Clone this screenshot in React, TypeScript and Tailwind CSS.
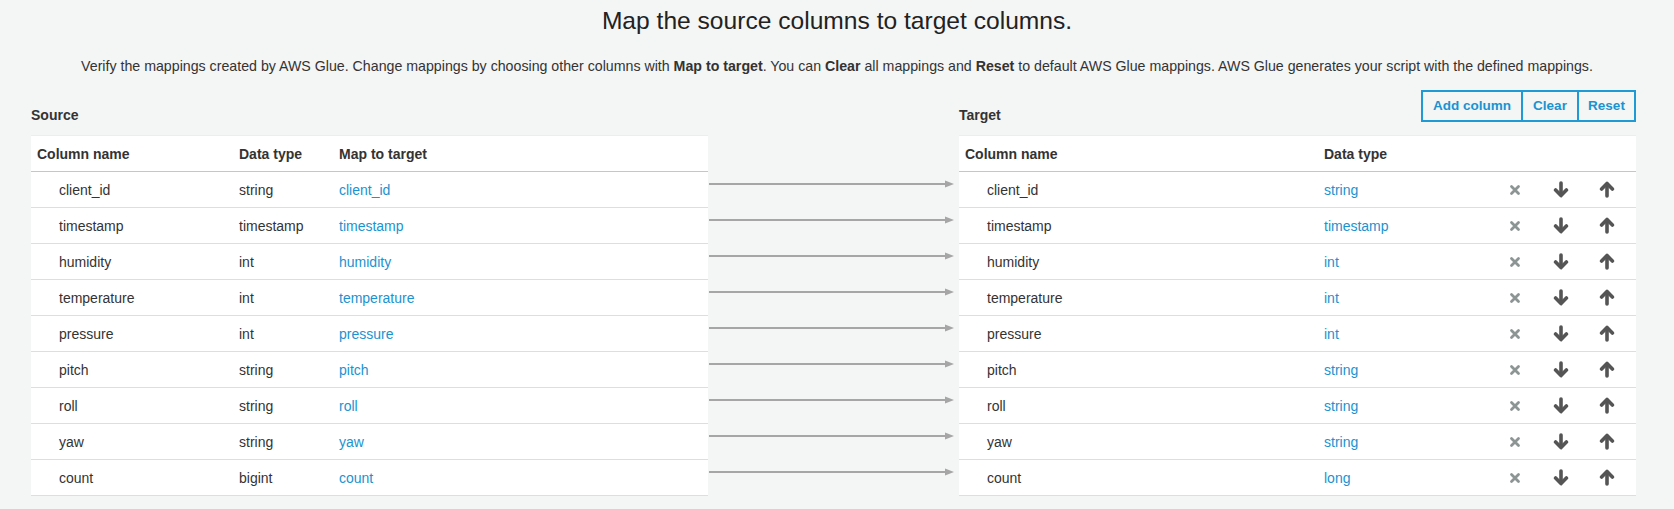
import React from "react";

const rows: [string, string, string, string][] = [
  ["client_id", "string", "client_id", "string"],
  ["timestamp", "timestamp", "timestamp", "timestamp"],
  ["humidity", "int", "humidity", "int"],
  ["temperature", "int", "temperature", "int"],
  ["pressure", "int", "pressure", "int"],
  ["pitch", "string", "pitch", "string"],
  ["roll", "string", "roll", "string"],
  ["yaw", "string", "yaw", "string"],
  ["count", "bigint", "count", "long"],
];

function Arrow() {
  return (
    <svg width="251" height="36" className="block">
      <rect x="1" y="11" width="237" height="2" fill="#a6a6a6" />
      <polygon points="237,8.5 246,12 237,15.5" fill="#a6a6a6" />
    </svg>
  );
}

function XIcon() {
  return (
    <svg width="12" height="12" viewBox="0 0 12 12" className="block">
      <path
        d="M2.5 2.5 L9.5 9.5 M9.5 2.5 L2.5 9.5"
        stroke="#8c9494"
        strokeWidth="2.8"
        strokeLinecap="round"
        fill="none"
      />
    </svg>
  );
}

function DownIcon() {
  return (
    <svg width="16" height="17" viewBox="0 0 16 17" className="block">
      <g stroke="#555555" strokeWidth="3.6" strokeLinecap="round" strokeLinejoin="round" fill="none">
        <path d="M8 2 V13" />
        <path d="M2.6 9 L8 14.6 L13.4 9" />
      </g>
    </svg>
  );
}

function UpIcon() {
  return (
    <svg width="16" height="17" viewBox="0 0 16 17" className="block">
      <g stroke="#555555" strokeWidth="3.6" strokeLinecap="round" strokeLinejoin="round" fill="none">
        <path d="M8 15 V4" />
        <path d="M2.6 8 L8 2.4 L13.4 8" />
      </g>
    </svg>
  );
}

export default function App() {
  return (
    <div
      className="w-full min-h-[509px] bg-[#f4f5f5] text-[#333333] text-[14px] leading-[20px]"
      style={{ fontFamily: '"Liberation Sans", Arial, sans-serif' }}
    >
      <h1 className="pt-[7px] text-center text-[24.6px] leading-[28px] font-normal text-[#222222]">
        Map the source columns to target columns.
      </h1>
      <p className="mt-[21px] text-center text-[14.2px]">
        Verify the mappings created by AWS Glue. Change mappings by choosing other columns with{" "}
        <b>Map to target</b>. You can <b>Clear</b> all mappings and <b>Reset</b> to default AWS Glue
        mappings. AWS Glue generates your script with the defined mappings.
      </p>

      <div className="mt-[14px] flex pl-[31px] pr-[38px] pb-[14px]">
        {/* Source */}
        <div className="w-[677px] shrink-0">
          <div className="h-[45px]">
            <div className="pt-[15px] font-bold">Source</div>
          </div>
          <div className="bg-white">
            <div className="grid h-[37px] grid-cols-[208px_100px_1fr] items-center border-t border-b border-t-[#eceeee] border-b-[#c6c6c6] font-bold">
              <div className="pl-[6px]">Column name</div>
              <div>Data type</div>
              <div>Map to target</div>
            </div>
            {rows.map((r) => (
              <div
                key={r[0]}
                className="grid h-[36px] grid-cols-[208px_100px_1fr] items-center border-b border-[#dedede]"
              >
                <div className="pl-[28px]">{r[0]}</div>
                <div>{r[1]}</div>
                <div className="text-[#1a93d0]">{r[2]}</div>
              </div>
            ))}
          </div>
        </div>

        {/* Arrows */}
        <div className="w-[251px] shrink-0 pt-[82px]">
          {rows.map((r) => (
            <Arrow key={r[0]} />
          ))}
        </div>

        {/* Target */}
        <div className="w-[677px] shrink-0">
          <div className="flex h-[45px] items-start justify-between">
            <div className="pt-[15px] font-bold">Target</div>
            <div className="flex h-[32px] text-[13.5px] font-bold text-[#1a93d0]">
              <button className="flex h-[32px] w-[102px] items-center justify-center border-2 border-[#1e9bd7]">
                Add column
              </button>
              <button className="-ml-[2px] flex h-[32px] w-[58px] items-center justify-center border-2 border-[#1e9bd7]">
                Clear
              </button>
              <button className="-ml-[2px] flex h-[32px] w-[59px] items-center justify-center border-2 border-[#1e9bd7]">
                Reset
              </button>
            </div>
          </div>
          <div className="bg-white">
            <div className="grid h-[37px] grid-cols-[365px_168px_46px_46px_46px_1fr] items-center border-t border-b border-t-[#eceeee] border-b-[#c6c6c6] font-bold">
              <div className="pl-[6px]">Column name</div>
              <div>Data type</div>
              <div />
              <div />
              <div />
              <div />
            </div>
            {rows.map((r) => (
              <div
                key={r[0]}
                className="grid h-[36px] grid-cols-[365px_168px_46px_46px_46px_1fr] items-center border-b border-[#dedede]"
              >
                <div className="pl-[28px]">{r[0]}</div>
                <div className="text-[#1a93d0]">{r[3]}</div>
                <div className="flex items-center justify-center">
                  <XIcon />
                </div>
                <div className="flex items-center justify-center">
                  <DownIcon />
                </div>
                <div className="flex items-center justify-center">
                  <UpIcon />
                </div>
                <div />
              </div>
            ))}
          </div>
        </div>
      </div>
    </div>
  );
}
